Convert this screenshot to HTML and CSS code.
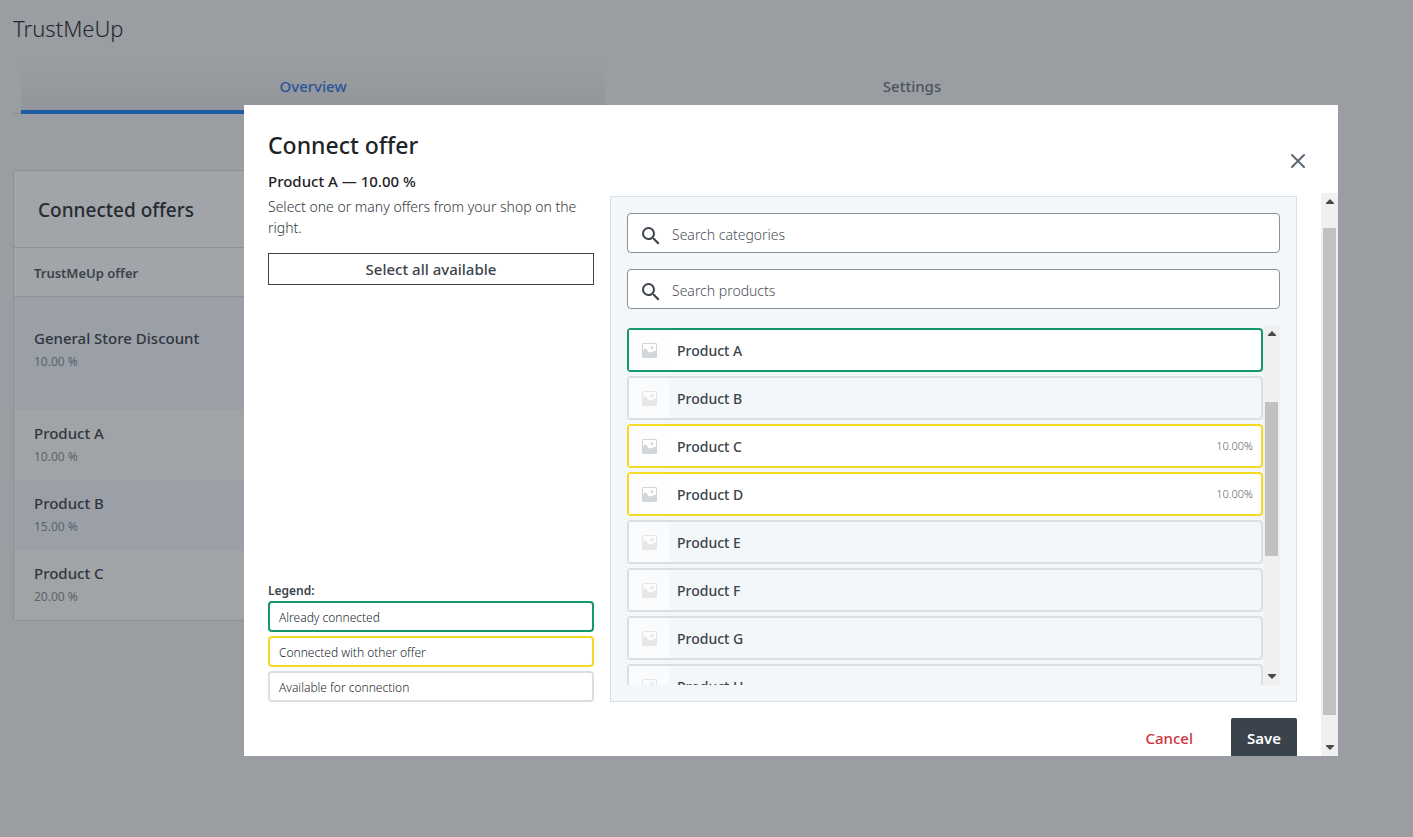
FILE: index.html
```html
<!DOCTYPE html>
<html lang="en">
<head>
<meta charset="utf-8">
<meta name="viewport" content="width=device-width, initial-scale=1">
<title>TrustMeUp</title>
<link rel="stylesheet" href="styles.css">
</head>
<body>
<svg class="defs" aria-hidden="true">
  <symbol id="search" viewBox="0 0 24 24"><path fill="currentColor" d="M15.500 14h-.79l-.28-.27A6.470 6.470 0 0 0 16 9.500 6.500 6.500 0 1 0 9.500 16c1.610 0 3.090-.59 4.230-1.570l.27.28v.79l5 4.990L20.490 19l-4.990-5zm-6 0C7.010 14 5 11.990 5 9.500S7.010 5 9.500 5 14 7.010 14 9.500 11.990 14 9.500 14z"/></symbol>
  <symbol id="photo" viewBox="0 0 15 15"><path fill="currentColor" fill-rule="evenodd" d="M1 0h13a1 1 0 0 1 1 1v13a1 1 0 0 1-1 1H1a1 1 0 0 1-1-1V1a1 1 0 0 1 1-1zM1 1v6l2-1.500c2 0 2.500 4 5 4 2 0 2-1.500 6-1.500V1zM10 3a1.500 1.500 0 1 1 0 3 1.500 1.500 0 0 1 0-3z"/></symbol>
  <symbol id="up" viewBox="0 0 8 5"><path fill="#4a4a4a" d="M4 0l4 4v1H0V4z"/></symbol>
  <symbol id="down" viewBox="0 0 8 5"><path fill="#4a4a4a" d="M4 5l4-4V0H0v1z"/></symbol>
</svg>
<main class="page">
  <h1 class="page-title">TrustMeUp</h1>
  <nav class="tabs">
    <a class="tab tab-active" href="#overview">Overview</a>
    <a class="tab" href="#settings">Settings</a>
  </nav>
  <section class="card">
    <h2 class="card-title">Connected offers</h2>
    <table class="offers">
      <thead><tr><th>TrustMeUp offer</th></tr></thead>
      <tbody>
        <tr class="general"><td><span class="offer-name">General Store Discount</span><span class="offer-rate">10.00 %</span></td></tr>
        <tr><td><span class="offer-name">Product A</span><span class="offer-rate">10.00 %</span></td></tr>
        <tr><td><span class="offer-name">Product B</span><span class="offer-rate">15.00 %</span></td></tr>
        <tr><td><span class="offer-name">Product C</span><span class="offer-rate">20.00 %</span></td></tr>
      </tbody>
    </table>
  </section>
</main>

<div class="overlay">
  <div class="modal" role="dialog" aria-modal="true" aria-labelledby="modal-title">
    <header class="modal-header">
      <div>
        <h2 class="modal-title" id="modal-title">Connect offer</h2>
        <p class="modal-subtitle">Product A — 10.00 %</p>
      </div>
      <button class="close" type="button" aria-label="Close"><svg width="15" height="14" viewBox="0 0 15 14"><path d="M1 1l12 12M13 1L1 13" fill="none" stroke="currentColor" stroke-width="2" stroke-linecap="round"/></svg></button>
    </header>
    <div class="modal-body">
      <div class="modal-content">
        <div class="columns">
          <div class="side">
            <p class="hint">Select one or many offers from your shop on the right.</p>
            <button class="select-all" type="button">Select all available</button>
            <div class="legend">
              <h3 class="legend-title">Legend:</h3>
              <p class="legend-item connected">Already connected</p>
              <p class="legend-item other">Connected with other offer</p>
              <p class="legend-item">Available for connection</p>
            </div>
          </div>
          <div class="panel">
            <label class="search"><svg class="search-icon"><use href="#search"/></svg><input class="search-input" type="text" placeholder="Search categories" aria-label="Search categories"></label>
            <label class="search"><svg class="search-icon"><use href="#search"/></svg><input class="search-input" type="text" placeholder="Search products" aria-label="Search products"></label>
            <div class="list">
              <div class="rows">
                <button type="button" class="row connected"><span class="thumb"><svg class="photo"><use href="#photo"/></svg></span><span class="name">Product A</span></button>
                <button type="button" class="row"><span class="thumb"><svg class="photo"><use href="#photo"/></svg></span><span class="name">Product B</span></button>
                <button type="button" class="row other"><span class="thumb"><svg class="photo"><use href="#photo"/></svg></span><span class="name">Product C</span><span class="rate">10.00%</span></button>
                <button type="button" class="row other"><span class="thumb"><svg class="photo"><use href="#photo"/></svg></span><span class="name">Product D</span><span class="rate">10.00%</span></button>
                <button type="button" class="row"><span class="thumb"><svg class="photo"><use href="#photo"/></svg></span><span class="name">Product E</span></button>
                <button type="button" class="row"><span class="thumb"><svg class="photo"><use href="#photo"/></svg></span><span class="name">Product F</span></button>
                <button type="button" class="row"><span class="thumb"><svg class="photo"><use href="#photo"/></svg></span><span class="name">Product G</span></button>
                <button type="button" class="row"><span class="thumb"><svg class="photo"><use href="#photo"/></svg></span><span class="name">Product H</span></button>
              </div>
              <div class="scrollbar scrollbar-list" aria-hidden="true"><svg class="arrow"><use href="#up"/></svg><span class="track"><span class="handle"></span></span><svg class="arrow"><use href="#down"/></svg></div>
            </div>
          </div>
        </div>
        <footer class="actions">
          <button class="cancel" type="button">Cancel</button>
          <button class="save" type="button">Save</button>
        </footer>
      </div>
      <div class="scrollbar scrollbar-modal" aria-hidden="true"><svg class="arrow"><use href="#up"/></svg><span class="track"><span class="handle"></span></span><svg class="arrow"><use href="#down"/></svg></div>
    </div>
  </div>
</div>
</body>
</html>
```
FILE: styles.css
```css
* { box-sizing: border-box; }
body { margin: 0; background: #9a9da1; color: #3b434b; font-family: "Noto Sans", "Open Sans", sans-serif; font-size: 14px; line-height: 20px; }
h1, h2, h3, p { margin: 0; font-weight: 400; }
button { font: inherit; color: inherit; background: none; border: 0; padding: 0; cursor: pointer; }
.defs { position: absolute; width: 0; height: 0; }

.page { max-width: 1212px; padding: 12px 0 0 13px; }
.page-title { font-size: 22px; line-height: 32px; font-weight: 300; color: #23272d; }
.tabs { display: flex; gap: 15px; margin-top: 16px; padding: 0 8px; border-bottom: 1px solid #8b9096; }
.tab { flex: 1; height: 54px; margin-bottom: -1px; padding-top: 16px; text-align: center; font-size: 15px; font-weight: 500; color: #4a5660; text-decoration: none; }
.tab-active { color: #2a5597; background: linear-gradient(#9a9da1, #929599); border-bottom: 4px solid #1f5aa6; }
.card { margin-top: 56px; border: 1px solid #8b9297; border-radius: 2px; background: #a1a4a8; }
.card-title { padding: 25px 24px 23px; font-size: 19px; line-height: 28px; font-weight: 500; color: #262b31; }
.offers { width: 100%; border-collapse: collapse; text-align: left; }
.offers th { height: 49px; padding: 2px 20px 0; border: solid #8b9297; border-width: 1px 0; font-size: 13px; font-weight: 600; color: #3a414a; }
.offers td { height: 70px; padding: 0 20px; background: #a1a4a7; }
.offers .general td { height: 113px; padding-bottom: 6px; }
.offers tbody tr:nth-child(odd) td { background: #9ba0a8; }
.offer-name, .offer-rate { display: block; line-height: 24px; }
.offer-name { font-size: 15px; font-weight: 500; color: #30363e; }
.offer-rate { font-size: 12px; color: #59636c; }

.overlay { position: fixed; inset: 0; display: flex; padding: 105px 75px 81px 244px; }
.modal { flex: 1; min-width: 0; display: flex; flex-direction: column; background: #fff; }
.modal-header { display: flex; justify-content: space-between; padding: 24px 24px 0; height: 88px; }
.modal-title { font-size: 23px; line-height: 32px; font-weight: 500; color: #1d2327; }
.modal-subtitle { margin-top: 10px; font-size: 15px; font-weight: 500; color: #1d2327; }
.close { display: flex; align-self: center; margin-right: 8px; padding: 0; color: #5d6874; }
.modal-body { flex: 1; min-height: 0; display: flex; }
.modal-content { flex: 1; min-width: 0; overflow: hidden; padding: 3px 24px 0; }
.columns { display: grid; grid-template-columns: minmax(0, 326fr) minmax(0, 687fr); gap: 16px; }
.side { display: flex; flex-direction: column; }
.hint { font-size: 14px; line-height: 21px; font-weight: 300; color: #32383e; }
.select-all { height: 32px; margin-top: 15px; border: 1px solid #3a434b; font-size: 15px; font-weight: 500; }
.legend { margin-top: auto; display: flex; flex-direction: column; gap: 4px; }
.legend-title { font-size: 12px; line-height: 13px; font-weight: 600; }
.legend-item { padding: 6px 9px 4px; border: 2px solid #dadfe4; border-radius: 4px; font-size: 12px; line-height: 17px; font-weight: 300; color: #22282e; }
.panel { display: flex; flex-direction: column; gap: 16px; padding: 16px; border: 1px solid #d8dfe6; background: #f3f7fa; }
.search { display: flex; align-items: center; height: 40px; padding-left: 11px; border: 1px solid #8b8f97; border-radius: 4px; background: #fff; }
.search-icon { flex: none; width: 24px; height: 24px; margin-top: 6px; color: #394149; }
.search-input { flex: 1; min-width: 0; height: 38px; padding: 2px 9px 0; border: 0; outline: 0; background: none; font: inherit; font-weight: 300; }
.search-input::placeholder { color: #4b5158; opacity: 1; }
.list { display: flex; height: 360px; }
.rows { flex: 1; min-width: 0; display: flex; flex-direction: column; gap: 4px; padding-top: 3px; overflow: hidden; }
.row { flex: none; display: flex; align-items: center; height: 44px; padding-right: 8px; border: 2px solid #dadfe4; border-radius: 4px; text-align: left; }
.thumb { display: flex; align-items: center; justify-content: center; width: 40px; height: 40px; padding-left: 1px; background: #fafbfc; color: #e4e6e8; }
.photo { width: 15px; height: 15px; }
.name { flex: 1; padding: 2px 0 0 8px; font-weight: 500; }
.rate { font-size: 11px; font-weight: 300; color: #61656a; }
.connected { border-color: #12986a; }
.other { border-color: #f5d922; }
.row.connected, .row.other { background: #fff; }
.connected .thumb, .other .thumb { background: #fefefe; color: #d3d6d9; }
.scrollbar { flex: none; display: flex; flex-direction: column; align-items: center; justify-content: space-between; width: 17px; padding: 6px 2px; background: #f0f0f0; }
.arrow { flex: none; width: 8px; height: 5px; }
.track { flex: 1; width: 100%; }
.handle { display: block; width: 100%; background: #c1c1c1; }
.scrollbar-list .track { padding-top: 66px; }
.scrollbar-list .handle { height: 154px; }
.scrollbar-modal .track { display: flex; padding: 24px 0 30px; }
.actions { display: flex; justify-content: flex-end; align-items: center; gap: 38px; margin-top: 16px; font-size: 15px; }
.cancel { color: #cc3340; font-weight: 500; }
.save { height: 40px; padding: 0 16px; border-radius: 2px; background: #3a434b; color: #fff; font-weight: 600; }
```
